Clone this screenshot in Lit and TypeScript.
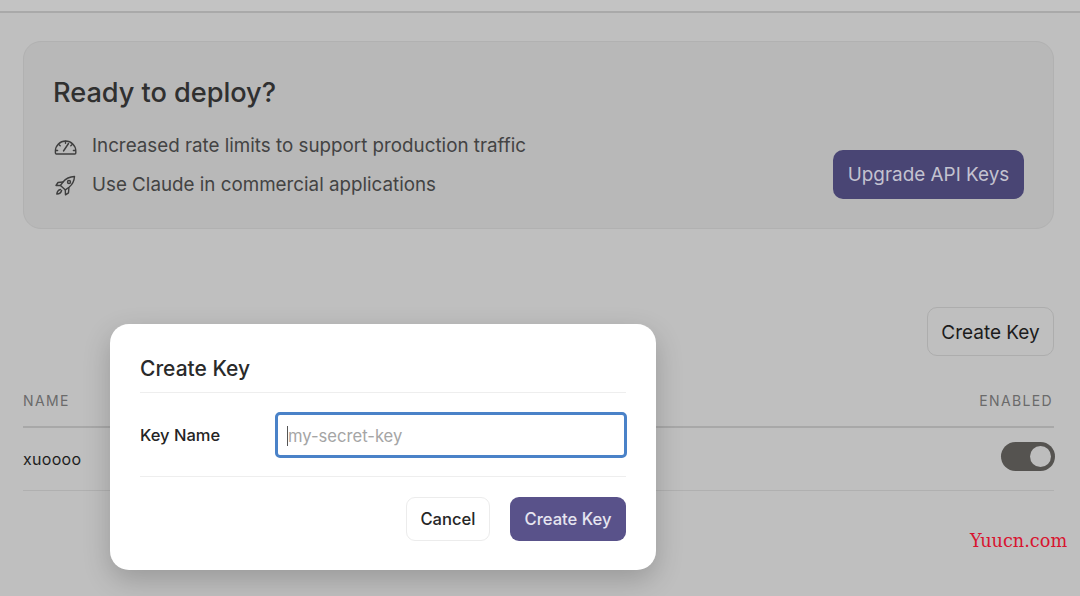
import { LitElement, html, css } from "lit";
import { customElement } from "lit/decorators.js";

@customElement("app-root")
export class AppRoot extends LitElement {
  static styles = css`
    :host { display: block; width: 1080px; height: 596px; overflow: hidden; position: relative; background: #bfbfbf; font-family: Inter, "Liberation Sans", sans-serif; color: #2c2c2c; }
    * { box-sizing: border-box; }
    .top { height: 13px; background: #c3c3c3; border-bottom: 2px solid #a9a9a9; }
    .page { padding: 28px 26px 0 23px; display: flex; flex-direction: column; }
    .card { height: 188px; border: 1px solid #b1b1b1; border-radius: 18px; background: #b8b8b8; padding: 33px 29px 0 29px; display: flex; justify-content: space-between; }
    h1 { margin: 0; font-size: 27.2px; line-height: 36px; font-weight: 450; color: #303030; letter-spacing: -0.05px; }
    .features { margin-top: 22px; display: flex; flex-direction: column; gap: 13px; }
    .feature { display: flex; align-items: center; gap: 14px; font-size: 18.8px; line-height: 26px; color: #434343; }
    .feature svg { width: 25px; height: 25px; fill: none; stroke: #3e3e3e; stroke-width: 1.4; stroke-linecap: round; stroke-linejoin: round; flex: none; }
    .upgrade { align-self: flex-start; margin-top: 75px; height: 49px; width: 191px; border-radius: 10px; background: #494574; color: #c3c2d0; font-size: 18.9px; display: flex; align-items: center; justify-content: center; }
    .actions { display: flex; justify-content: flex-end; margin-top: 78px; }
    .ghost { width: 127px; height: 49px; padding-top: 1px; border: 1px solid #adadad; border-radius: 10px; background: #bfbfbf; font-size: 19px; color: #1c1c1c; display: flex; align-items: center; justify-content: center; }
    .thead { display: flex; justify-content: space-between; align-items: flex-end; height: 72px; padding: 0 1px 17px 0; border-bottom: 2px solid #a8a8a8; font-size: 14px; line-height: 17px; letter-spacing: 1.35px; color: #6a6a6a; font-weight: 400; }
    .row { height: 63px; display: flex; justify-content: space-between; align-items: center; border-bottom: 1px solid #b0b0b0; font-size: 16px; letter-spacing: 0.3px; color: #1d1d1d; }
    .toggle { width: 54px; height: 29px; margin: 0 -1px 5px 0; border-radius: 15px; background: #555350; display: flex; align-items: center; justify-content: flex-end; padding-right: 4px; }
    .knob { width: 21px; height: 21px; border-radius: 50%; background: #bdbdbd; }
    .modal { position: absolute; left: 110px; top: 324px; width: 546px; height: 246px; background: #fff; border-radius: 19px; box-shadow: 0 10px 28px rgba(0,0,0,0.2); padding: 0 30px; display: flex; flex-direction: column; }
    h2 { margin: 0; height: 69px; display: flex; align-items: center; padding-top: 20px; font-size: 21px; font-weight: 450; color: #2a2a2a; border-bottom: 1px solid #eeeeee; }
    .field { height: 84px; display: flex; align-items: center; border-bottom: 1px solid #eeeeee; }
    label { width: 135px; font-size: 16.5px; font-weight: 450; color: #242424; flex: none; }
    .input { flex: 1; height: 46px; margin-right: -1px; border: 3px solid #4a82c8; border-radius: 5px; padding: 2px 0 0 9px; display: flex; align-items: center; font-size: 16.6px; color: #a5a5a5; }
    .caret { width: 1px; height: 20px; background: #555; flex: none; }
    .foot { display: flex; justify-content: flex-end; gap: 20px; padding-top: 20px; }
    .btn { height: 44px; border-radius: 9px; display: flex; align-items: center; justify-content: center; font-size: 16.6px; font-weight: 450; }
    .cancel { width: 84px; border: 1px solid #ececec; color: #262626; background: #fff; }
    .create { width: 116px; background: #59528a; color: #e6e5f0; }
    .mark { position: absolute; left: 970px; top: 530px; font-family: "DejaVu Serif", serif; font-size: 17.7px; color: #d8142f; line-height: 22px; }
  `;

  render() {
    return html`
      <div class="top"></div>
      <div class="page">
        <section class="card">
          <div>
            <h1>Ready to deploy?</h1>
            <div class="features">
              <div class="feature">
                <svg viewBox="0 0 25 25">
                  <path d="M3.2 20 h18.6 a1 1 0 0 0 1 -1 v-2 a10.2 10 0 0 0 -20.4 0 v2 a1 1 0 0 0 .8 1 z"/>
                  <path d="M12.5 7.2 v2 M5.8 10.5 l1.4 1.2 M19.2 10.5 l-1.4 1.2 M2.6 16.5 h2 M20.4 16.5 h2"/>
                  <path d="M10.5 17 L15.5 9.5"/>
                </svg>
                Increased rate limits to support production traffic
              </div>
              <div class="feature">
                <svg viewBox="0 0 25 25">
                  <path d="M21.5 3.5 c-5 .2 -8.6 2 -11.5 5.5 l-2.5 3.4 4.9 4.5 3.6 -2.6 c3.6 -3 5.3 -6.2 5.5 -10.8 z"/>
                  <path d="M10 9 l-5 .5 -2 3 4.5 0"/>
                  <path d="M15.9 14.8 l-.4 5 -3 2 -.2 -4.6"/>
                  <path d="M7.5 16.5 c-2 .4 -3.4 2 -3.7 4.6 c2.6 -.2 4.3 -1.6 4.8 -3.6"/>
                  <circle cx="16" cy="9" r="1.5"/>
                </svg>
                Use Claude in commercial applications
              </div>
            </div>
          </div>
          <div class="upgrade">Upgrade API Keys</div>
        </section>
        <div class="actions"><div class="ghost">Create Key</div></div>
        <div class="thead"><span>NAME</span><span>ENABLED</span></div>
        <div class="row"><span>xuoooo</span><div class="toggle"><div class="knob"></div></div></div>
      </div>
      <div class="modal">
        <h2>Create Key</h2>
        <div class="field">
          <label>Key Name</label>
          <div class="input"><span class="caret"></span>my-secret-key</div>
        </div>
        <div class="foot">
          <div class="btn cancel">Cancel</div>
          <div class="btn create">Create Key</div>
        </div>
      </div>
      <div class="mark">Yuucn.com</div>
    `;
  }
}
